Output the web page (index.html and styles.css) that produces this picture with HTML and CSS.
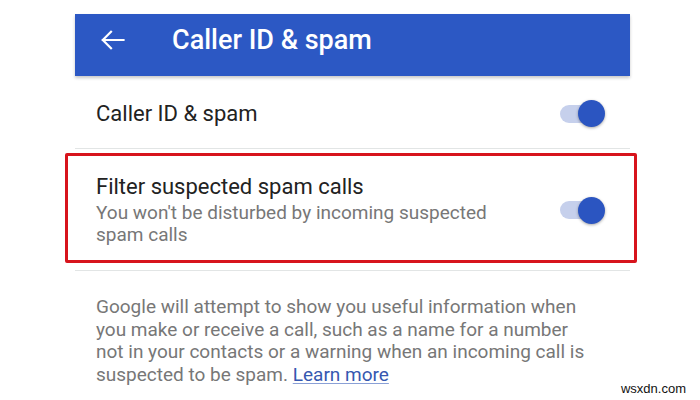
FILE: index.html
```html
<!DOCTYPE html>
<html>
<head>
<meta charset="utf-8">
<link rel="stylesheet" href="styles.css">
</head>
<body>
<div class="page">
  <header class="appbar">
    <svg class="back" viewBox="0 0 24 24" width="24" height="24"><path d="M22.5 12H1.8M10 3.8L1.8 12l8.2 8.2" fill="none" stroke="#fff" stroke-width="2.2" stroke-linecap="square"/></svg>
    <h1 class="title">Caller ID &amp; spam</h1>
  </header>
  <div class="list">
    <div class="row row-single">
      <div class="row-text">
        <div class="row-title">Caller ID &amp; spam</div>
      </div>
      <div class="switch"></div>
    </div>
    <div class="row row-double highlighted">
      <div class="row-text">
        <div class="row-title">Filter suspected spam calls</div>
        <div class="row-sub">You won't be disturbed by incoming suspected spam calls</div>
      </div>
      <div class="switch"></div>
    </div>
    <p class="info">Google will attempt to show you useful information when you make or receive a call, such as a name for a number not in your contacts or a warning when an incoming call is suspected to be spam. <a href="#" class="link">Learn more</a></p>
  </div>
  <div class="watermark">wsxdn.com</div>
</div>
</body>
</html>
```
FILE: styles.css
```css
html, body {
  margin: 0;
  padding: 0;
  background: #fff;
}
body {
  font-family: Roboto, "Noto Sans", sans-serif;
  width: 700px;
  height: 400px;
  overflow: hidden;
}
.page {
  position: relative;
  width: 700px;
  height: 400px;
  padding-top: 14px;
  box-sizing: border-box;
}
.appbar {
  margin-left: 75px;
  width: 555px;
  height: 62px;
  background: #2c58c4;
  display: flex;
  align-items: center;
  box-sizing: border-box;
  padding-bottom: 11px;
  box-shadow: 0 2px 3px rgba(0, 0, 0, 0.22);
}
.back {
  margin-left: 26px;
  flex: none;
}
.title {
  margin: 0 0 0 47px;
  font-size: 27px;
  font-weight: 500;
  color: #fff;
  line-height: 30px;
  letter-spacing: 0;
}
.list {
  margin-left: 75px;
  width: 555px;
}
.row {
  display: flex;
  align-items: center;
  padding-left: 21px;
  padding-right: 26px;
  border-bottom: 1px solid #e2e5e5;
  box-sizing: border-box;
}
.row-single {
  height: 73px;
  padding-top: 3px;
}
.row-double {
  padding-top: 25px;
  padding-bottom: 24px;
  position: relative;
}
.row-text {
  flex: 1;
}
.row-title {
  font-size: 22px;
  line-height: 26px;
  color: #222;
}
.row-sub {
  margin-top: 2px;
  font-size: 19px;
  line-height: 22px;
  color: #777;
  width: 430px;
}
.highlighted::after {
  content: "";
  position: absolute;
  left: -10px;
  right: -7px;
  top: 4px;
  bottom: 7px;
  border: 3px solid #d7141c;
  border-radius: 2px;
}
.switch {
  position: relative;
  width: 44px;
  height: 18px;
  border-radius: 9px;
  background: #c6d0ec;
  flex: none;
}
.switch::after {
  content: "";
  position: absolute;
  right: -1px;
  top: -4.5px;
  width: 27px;
  height: 27px;
  border-radius: 50%;
  background: #2b55c1;
  box-shadow: 0 1px 3px rgba(0, 0, 0, 0.35);
}
.info {
  margin: 0;
  padding: 25px 0 0 21px;
  width: 500px;
  font-size: 19px;
  line-height: 22.6px;
  color: #777;
}
.link {
  color: #3658b0;
  text-decoration: underline;
  text-decoration-color: #8aa0d6;
  text-underline-offset: 2px;
}
.watermark {
  position: absolute;
  right: 14px;
  bottom: 4px;
  font-family: "Liberation Sans", Arial, sans-serif;
  font-size: 13px;
  color: #111;
}
```
